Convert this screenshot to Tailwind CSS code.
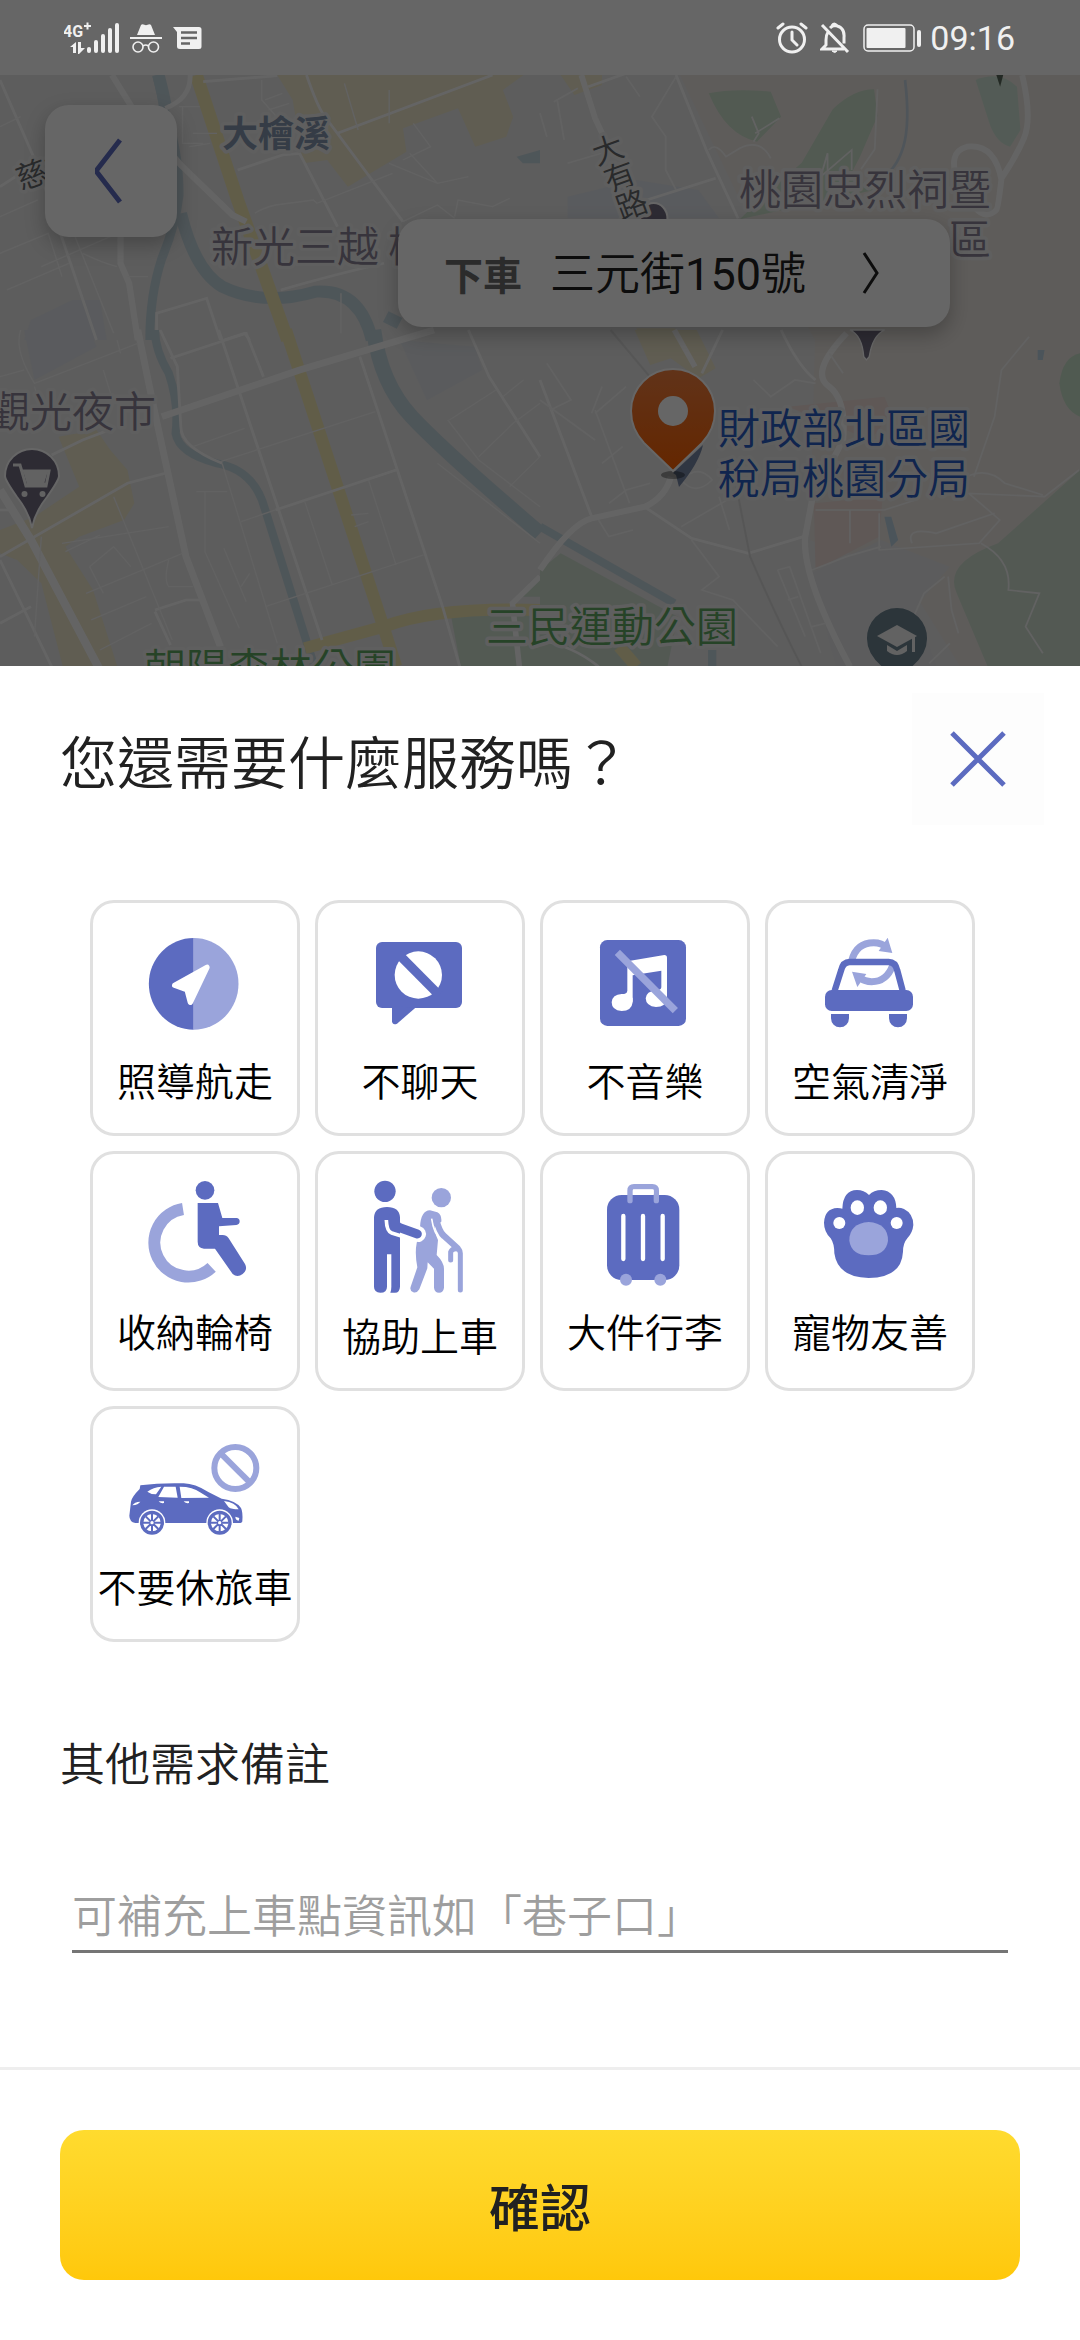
<!DOCTYPE html>
<html lang="zh-Hant">

<head>
    <meta charset="UTF-8">
    <meta name="viewport" content="width=device-width, initial-scale=1.0">
    <title>叫車服務需求</title>
    <script src="https://cdn.jsdelivr.net/npm/@tailwindcss/browser@4"></script>
</head>

<body class="flex flex-col min-h-screen bg-white text-[#212121] font-[350] font-['Noto_Sans_CJK_TC','Roboto',sans-serif]">

    <!-- status bar -->
    <header class="flex items-center justify-between h-[75px] pl-[64px] pr-[65px] bg-[#666666] text-[#f0f0f0]">
        <div class="flex items-center gap-[10px]">
            <svg class="w-[56px] h-[32px]" viewBox="64 21 56 32" fill="currentColor">
                <text x="63" y="36" font-size="16" font-weight="700" font-family="Roboto">4G</text>
                <path d="M84 25h7M87.500 21.500v7" stroke="currentColor" stroke-width="2" />
                <path d="M70 46l6-5v11h-3v-6zM78 41h3v6h4l-6 6h-1z" />
                <rect x="87" y="46" width="4" height="6" rx="2" />
                <rect x="94" y="39" width="4" height="13" rx="2" />
                <rect x="101" y="33" width="4" height="19" rx="2" />
                <rect x="108" y="27" width="4" height="25" rx="2" />
                <rect x="115" y="22" width="4" height="30" rx="2" />
            </svg>
            <svg class="w-[32px] h-[32px]" viewBox="130 22 32 32" fill="currentColor">
                <path d="M137 35l4-10q1-1 2.500-.5l2.500.8 2.500-.8q1.500-.5 2.500.5l4 10zM130 37h32v2h-32z" />
                <g fill="none" stroke="currentColor" stroke-width="1.600">
                    <circle cx="138" cy="47" r="5" />
                    <circle cx="153.500" cy="47" r="5" />
                    <path d="M143 46q2.700-2 5.500 0" />
                </g>
            </svg>
            <svg class="w-[30px] h-[26px]" viewBox="173 25 30 26">
                <path d="M174 27h26q2.500 0 2.500 2.500v17q0 2.500-2.500 2.500h-19q-3 0-3-2.500V32z" fill="currentColor" />
                <path d="M182 32.500h16M182 38h16M182 43.500h9" stroke="#666666" stroke-width="2.400" />
            </svg>
        </div>
        <div class="flex items-center gap-[12px]">
            <svg class="w-[32px] h-[32px]" viewBox="776 21 32 32" fill="none" stroke="currentColor" stroke-width="3" stroke-linecap="round">
                <circle cx="792" cy="38.500" r="12.500" />
                <path d="M792 31v8l5 5M778 27l5-4M806 27l-5-4" />
            </svg>
            <svg class="w-[30px] h-[32px]" viewBox="819 21 30 32" fill="none" stroke="currentColor" stroke-width="3">
                <path d="M821 24l26 27M827 31q-2 3-2 8v5l-4 4h22M829 27q2-2 4-2.500 11 1 10 12v6" />
                <path d="M831 25q2-4 5 0" />
                <path d="M831 50q3 3 5 0z" fill="currentColor" stroke-width="1" />
            </svg>
            <svg class="w-[60px] h-[28px]" viewBox="863 23 60 28" fill="currentColor">
                <rect x="865" y="24" width="50" height="26" rx="4" fill="none" stroke="currentColor" stroke-width="1.500" />
                <rect x="867.500" y="27" width="39" height="20" rx="1" />
                <rect x="918" y="29" width="4" height="17" rx="2" />
            </svg>
            <time class="-ml-1 font-['Roboto'] text-[34px] leading-[40px] font-normal">09:16</time>
        </div>
    </header>

    <!-- map, dimmed behind the sheet -->
    <section class="relative h-[591px] shrink-0 overflow-hidden bg-[#e8e8e8]">
        <svg class="absolute inset-0 w-full h-full" viewBox="0 75 1080 591" preserveAspectRatio="xMidYMid slice" fill="none">
            <!-- hills on the east side -->
            <path d="M680 75H1080V666H960L900 570 810 540 815 340 740 200z" fill="#ebe6e1" />
            <!-- north west -->
            <g transform="scale(.3444 .3333)">
                <path d="M805 225h715l-60 45 30 80-20 60-90 30-50-115-160 60 10 70-170 105-60-80-70 10-30-190z" fill="#efe8cc" />
                <path d="M90 960l120-60 80 0 20 120H70z" fill="#e0e4ea" />
                <path d="M455 225q15 60 20 100 45 120 45 260-10 90-50 190-35 110-35 245" stroke="#c4d6de" stroke-width="26" />
                <path d="M460 225q15 60 20 90M525 640q40 170 120 220 120 60 270 15 130-10 165 145M1120 950l40 20" stroke="#c4d6de" stroke-width="36" />
                <path d="M1500 470l68-20v40h-50z" fill="#c4d6de" />
                <path d="M570 225L690 600 835 1020" stroke="#f3e8b4" stroke-width="38" />
                <g stroke="#fbfbfb" stroke-width="26">
                    <path d="M325 225l60 100 140 170 150 150 40 20M350 700v90l25 60 25 170" stroke-width="18" />
                    <path d="M480 325q75-30 72-100" stroke-width="14" />
                </g>
                <path d="M0 240L110 500 280 1020M0 560l60-40M590 245l215-18M890 225q30 90 50 120L1170 665M980 400L1430 225M690 510l130-45 50-5 110 220M815 870q170-50 300-80M455 1020v-80l145-45 40 125M650 1020l60-20 15 20" stroke="#fbfbfb" stroke-width="8" />
                <path d="M0 380l60-30M0 650l110-50M0 760l140-60 40 130M20 870l180-80M210 690l120 310M120 800l200-90M240 760q60 30 100 40M370 830h60M530 320v110h60M520 320h60M550 440l60-10M560 400h70M760 240v60l60 70 40 80M770 300l50-20M780 330l60-20M740 640q20-15 60-25l110-15 10 10 220-90M1170 665l100-50 50 40M1130 490l140 60 90-20M1190 460l80 90M1320 650l10-50 100 20 50-25M1200 370l50 70-80 40M1130 370v-100M1000 250l40 140M990 1000v-120" stroke="#f6f6f6" stroke-width="4" />
            </g>
            <!-- north east -->
            <g transform="translate(540 0) scale(.3444 .3333)">
                <path d="M490 280q70-15 180-5l30 75-70 75q-90-20-140-145zM970 268l10 80-50 120-30 60 80 40-400 90 60-60 120-110 90-160q60-60 120-60z" fill="#cde1cd" />
                <path d="M1265 240q70-30 120 20l10 130-30 50q-40-10-60-70z" fill="#d0e4d6" />
                <path d="M1325 225h20l-9 35z" fill="#58685a" />
                <path d="M60 225h120v30l-80 30zM280 985h110l70 35H290z" fill="#efe8cc" />
                <path d="M80 590l200-50 180 30 60 85H80z" fill="#dfe3ea" />
                <path d="M1060 240q15 130-5 200t-70 100" stroke="#c6d4e2" stroke-width="8" />
                <path d="M120 225l40 130 50 110M1400 225q30 130 5 190t-65 120q-10 90-15 95-30 30-60-5M1340 540q-20-110-100-100-60 15-25 110" stroke="#fbfbfb" stroke-width="17" />
                <path d="M395 225l90 230 90 200M140 260l110-40M310 600l200-65" stroke="#fbfbfb" stroke-width="8" />
                <path d="M395 230l-70 120 40 60v100l30 60M250 230l40 60M50 300l20 120M110 265l-70 40M490 450q20-25 50 20l40-25q60-30 90 30M615 350l20 50-15 25M980 268l-8 180-40 60M835 560v-100l-20 70 90-80v60M695 355l-70 45M0 340l20 70M80 490l130-40" stroke="#f6f6f6" stroke-width="5" />
                <ellipse cx="330" cy="655" rx="40" ry="46" fill="#716c80" stroke="#fff" stroke-width="6" />
            </g>
            <!-- south west -->
            <g transform="translate(0 330) scale(.3444 .3333)">
                <path d="M70 0l190 0 20 50-180 100z" fill="#e0e4ea" />
                <path d="M1160 30l220 20 20 70-160 90z" fill="#e0e3e8" />
                <path d="M170 320l110-20 40 60 50 60 20 100-30 50-130 50-40 30 80 130 80 260H190L120 760 50 690 0 670v-70l100-40 130-90z" fill="#efe8cc" />
                <path d="M1310 860l258-20v170l-230 0z" fill="#cfe1d0" />
                <path d="M1510 800l58-60v60z" fill="#cfe1d0" />
                <path d="M450 0q0 60 40 130 30 90 20 180 10 60 120 90 110 20 140 140l140 460" stroke="#c4d6de" stroke-width="24" />
                <path d="M1085 0q20 160 110 260T1568 610" stroke="#c4d6de" stroke-width="44" />
                <path d="M830 0L1110 880l40 130M885 955l230-65q150-60 453-50" stroke="#f3e8b4" stroke-width="36" />
                <path d="M400 0l50 250 90 430 100 270M470 260l400-140L1260 0" stroke="#fbfbfb" stroke-width="20" />
                <path d="M0 480l90 150 200 390" stroke="#fbfbfb" stroke-width="24" />
                <path d="M1568 740l-80 80 20 190" stroke="#fbfbfb" stroke-width="16" />
                <path d="M465 0l50 110 10 180q0 60 120 110" stroke="#fbfbfb" stroke-width="8" />
                <path d="M495 85L715 10l50 130M635 0l300 930M150 375l90-45 90-35M0 680l370-220 110-30M800 540l350-120M1045 80l240 750 50 180M1360 0l60 140 148 240M0 690l150 320M0 880l90-50M450 840l90-30h45M450 845l45 100M0 540h30" stroke="#fbfbfb" stroke-width="8" />
                <path d="M1270 400l298 240M640 395l450-150M560 350l150-55M700 575l100-35M885 515l80 250M770 830l460-155M1070 450l80 255M1020 555l50-5M1030 590l40-15M645 400l160 540M570 485h90M595 485v180l100 230M650 655l65 160M490 690q-15 60 0 80h70M330 500l170 430M180 640l310-50M190 665l100-50M260 710l70-60 50 60M250 790l280-120M265 870l160-70M290 960l150-80M260 710l40 80M0 140l70-20M60 0q-20 60 40 160l300-120M100 170l30 100M300 120l30 100M340 30l10 40M1300 270l90 120 178 140M1305 270l135-90M1390 380l100-100 78-60M1480 470l88-90M1460 200l60-50M120 620l-20 300M700 770l25-40" stroke="#f4f4f4" stroke-width="4" />
            </g>
            <!-- south east -->
            <g transform="translate(540 330) scale(.3444 .3333)">
                <path d="M275 0h180l55 115-50 30-80-60-60 20z" fill="#efe8cc" />
                <path d="M795 520l200-20-10 120-185 100zM720 230l280-30 20 50-60 80z" fill="#eddcd8" />
                <path d="M790 730l200-100 200 80-100 120 60 180H860z" fill="#e6e6e8" />
                <path d="M0 720l60-50 340 190-30 150H0zM1568 420L1330 640q-160 60-120 150l90 220h268z" fill="#cfdfd0" />
                <path d="M1568 70q-50 10-60 90 10 80 60 100z" fill="#c8e0ca" />
                <path d="M1000 560h20l20 70-20 20zM1445 60h20l-5 30h-15z" fill="#bcd3e2" />
                <path d="M0 590l390 230M500 960v50" stroke="#c4d6de" stroke-width="24" />
                <path d="M230 950l50 60" stroke="#f3e8b4" stroke-width="36" />
                <path d="M0 720Q90 580 150 565l155-35q60-30 75-90M900 1010Q760 740 770 620l20-110 90-180q10-120-40-160-60-40 50-160" stroke="#fbfbfb" stroke-width="18" />
                <path d="M390 0l60 110" stroke="#fbfbfb" stroke-width="16" />
                <path d="M310 535l130 90 165 45 160-50M0 150l150 410M530 0l-60 130M700 0q50 110 100 150M0 930q100 20 170 80" stroke="#fbfbfb" stroke-width="8" />
                <path d="M205 0l130 160M570 470l40 210q80 190 150 330" stroke="#d8d8d8" stroke-width="6" />
                <path d="M20 100l70 110-60 30M0 210l160 120M160 240l100 280M180 170l-30 80M160 250l90-80M170 570l30 50 70-20M200 520l50-40 70-20M240 350l-60 50M410 590l150-90M440 630l80 110-50 40 90 30 130 140M690 720l80 200M690 720l35-10 90 260M720 810l30-10M790 890l40-10M520 500l30 100M410 450q50-50 90 0-50 50-90 0M620 150l50 50 70-50 60 10M800 540h200l90-30M900 540v100M985 550v110l290-20 60-70-90-80 220 10 100-80M790 720l100-40 100-30M1080 640q-20-50 70-30l170-60M1240 440q60-30 110 20l110 35M1420 20l-80 100-20 140-60 180M1280 640q90 50 80 140l90 10-40 100 50 80M1175 740l-60 50-30 70M1185 740l10 100 20 70M840 70l40 60M1190 940l-60 60" stroke="#f5f5f5" stroke-width="5" />
                <path d="M900 0q35 15 40 80l8 10 8-10q10-65 45-80z" fill="#716c80" stroke="#fff" stroke-width="4" />
            </g>

            <!-- place names -->
            <g stroke="#eeeeee" stroke-width="7" stroke-linejoin="round" paint-order="stroke" font-size="42">
                <text x="222" y="147" font-size="36" font-weight="700" fill="#8496ae">大檜溪</text>
                <g fill="#8b8396">
                    <text x="211" y="262">新光三越 桃</text>
                    <text x="-12" y="427">觀光夜市</text>
                    <text x="739" y="205">桃園忠烈祠暨</text>
                    <text x="949" y="255">區</text>
                </g>
                <g fill="#66696c" font-size="31">
                    <text x="-15" y="12" transform="translate(607 149) rotate(-20)">大</text>
                    <text x="-15" y="12" transform="translate(619 176) rotate(-20)">有</text>
                    <text x="-15" y="12" transform="translate(631 204) rotate(-20)">路</text>
                    <text x="-15" y="12" transform="translate(31 174) rotate(-20)">慈文</text>
                </g>
                <g fill="#285cc4">
                    <text x="718" y="444">財政部北區國</text>
                    <text x="718" y="494">稅局桃園分局</text>
                </g>
                <g fill="#60a863">
                    <text x="486" y="642">三民運動公園</text>
                    <text x="144" y="684">朝陽森林公園</text>
                </g>
            </g>

            <!-- shopping pin -->
            <path d="M32 528q-3-16-15-31-12-17-12-21a27 27 0 1 1 54 0q0 4-12 21-12 15-15 31z" fill="#716c80" stroke="#fff" stroke-width="2" />
            <path d="M13 465h7l6 21h20l3-15H22M26 486v-2M27 484h18" stroke="#f4f4f4" stroke-width="3" />
            <path d="M23 471h25l-4 13H27z" fill="#f4f4f4" />
            <circle cx="24.500" cy="494" r="3" fill="#f4f4f4" />
            <circle cx="42.500" cy="494" r="3" fill="#f4f4f4" />
            <!-- school pin -->
            <path d="M897 608a30 30 0 0 1 30 31q0 16-18 30h-24q-18-14-18-30a30 30 0 0 1 30-31z" fill="#6f8592" />
            <path d="M877 636l20-11 20 11-20 11z" fill="#f4f4f4" />
            <path d="M887 645l10 6 10-6v6q-10 8-20 0zM912 637h3v15h-3z" fill="#f4f4f4" />
            <!-- drop-off pin -->
            <path d="M703 445l-30 28 3 2 3 12q20-24 24-42z" fill="#7787a6" />
            <ellipse cx="673" cy="475" rx="12" ry="4" fill="#000" fill-opacity=".35" />
            <path d="M673 471l-29-28q-13-14-13-32a42 42 0 0 1 84 0q0 18-13 32z" fill="url(#pin)" stroke="#fff" stroke-width="2" />
            <circle cx="673" cy="411" r="15" fill="#fff" />
            <defs>
                <linearGradient id="pin" x1="0" y1="0" x2="0" y2="1">
                    <stop offset="0" stop-color="#f28040" />
                    <stop offset="1" stop-color="#fa6000" />
                </linearGradient>
            </defs>
        </svg>

        <button type="button" aria-label="返回" class="absolute left-[45px] top-[30px] grid place-items-center size-[132px] rounded-3xl bg-white shadow-[0_8px_20px_rgba(0,0,0,0.25)]">
            <svg class="w-[32px] h-[66px]" viewBox="3 0 32 66" fill="none" stroke="#5c6bc0" stroke-width="5">
                <path d="M28 2L4 33l24 31" />
            </svg>
        </button>
        <button type="button" class="absolute right-[130px] top-[144px] flex items-center h-[108px] pl-[46px] pr-[70px] rounded-3xl bg-white text-[45px] leading-[60px] whitespace-nowrap text-[#212121] shadow-[0_8px_20px_rgba(0,0,0,0.25)]">
            <span class="text-[39px] font-bold text-[#6b6b6b]">下車</span>
            <span class="ml-[28px]">三元街<span class="font-['Roboto'] font-normal">150</span>號</span>
            <svg class="ml-[56px] w-[18px] h-[42px]" viewBox="0 0 18 42" fill="none" stroke="#212121" stroke-width="3">
                <path d="M2 1l13 20L2 41" />
            </svg>
        </button>
        <div class="absolute inset-0 bg-black/60 pointer-events-none"></div>
    </section>

    <!-- service sheet -->
    <main class="flex flex-col flex-1 bg-white">
        <div class="flex items-center justify-between pt-[27px] pl-[60px] pr-[36px]">
            <h1 class="text-[57px] leading-[72px]">您還需要什麼服務嗎？</h1>
            <button type="button" aria-label="關閉" class="grid place-items-center size-[132px] bg-[#fdfdfd]">
                <svg class="size-[56px]" viewBox="0 0 56 56" fill="none" stroke="#5c6bc0" stroke-width="5">
                    <path d="M2 2l52 52M54 2L2 54" />
                </svg>
            </button>
        </div>

        <div class="grid grid-cols-4 gap-[15px] mt-[75px] ml-[90px] mr-[105px] text-[39px] leading-[48px] text-black whitespace-nowrap">
            <button type="button" class="flex flex-col items-center gap-3 pb-[30px] border-3 border-[#e0e0e0] rounded-3xl">
                <svg class="w-full h-[140px]" viewBox="39 39 612 420">
                    <path d="M341 144a134 137 0 0 0 0 275z" fill="#5c6bc0" />
                    <path d="M341 144a134 137 0 0 1 0 275z" fill="#9aa4db" />
                    <path d="M284 286l97-54-50 105-10-38z" fill="#fff" stroke="#fff" stroke-width="16" stroke-linejoin="round" />
                </svg>
                <span>照導航走</span>
            </button>
            <button type="button" class="flex flex-col items-center gap-3 pb-[30px] border-3 border-[#e0e0e0] rounded-3xl">
                <svg class="w-full h-[140px]" viewBox="714 39 612 420">
                    <rect x="888" y="156" width="258" height="198" rx="18" fill="#5c6bc0" />
                    <path d="M936 350v44q2 13 15 7l57-49z" fill="#5c6bc0" />
                    <circle cx="1015" cy="255" r="71" fill="#fff" />
                    <path d="M955 192l122 123" stroke="#5c6bc0" stroke-width="27" />
                </svg>
                <span>不聊天</span>
            </button>
            <button type="button" class="flex flex-col items-center gap-3 pb-[30px] border-3 border-[#e0e0e0] rounded-3xl">
                <svg class="w-full h-[140px]" viewBox="39 39 612 420">
                    <rect x="210" y="150" width="258" height="258" rx="22" fill="#5c6bc0" />
                    <path d="M292 214l111-19q8 0 8 8v122h-17v-83l-86 14v79h-16z" fill="#fff" />
                    <path d="M308 325v12q-3 26-33 26-30-2-30-26 2-24 30-25 17 0 17-10zM411 315v10q-3 26-33 26-30-2-31-26 2-22 30-23 17-2 17-10z" fill="#fff" />
                    <path d="M262 187l174 175" stroke="#9aa4db" stroke-width="22" />
                </svg>
                <span>不音樂</span>
            </button>
            <button type="button" class="flex flex-col items-center gap-3 pb-[30px] border-3 border-[#e0e0e0] rounded-3xl">
                <svg class="w-full h-[140px]" viewBox="714 39 612 420">
                    <g fill="none" stroke="#9aa4db" stroke-width="21">
                        <path d="M965 212q14-54 66-54 24 0 40 15" />
                        <path d="M1088 226q-18 49-63 49-20 0-36-12" />
                    </g>
                    <path d="M1073 143l14 46-41-6zM966 245l43 7-27 39z" fill="#9aa4db" />
                    <path d="M914 302l19-60q6-26 26-26h117q20 0 26 26l16 60" fill="none" stroke="#5c6bc0" stroke-width="19" />
                    <rect x="885" y="300" width="264" height="63" rx="20" fill="#5c6bc0" />
                    <path d="M903 372h54v13a27 27 0 0 1-54 0zM1077 372h54v13a27 27 0 0 1-54 0z" fill="#5c6bc0" />
                </svg>
                <span>空氣清淨</span>
            </button>
            <button type="button" class="flex flex-col items-center gap-3 pb-[30px] border-3 border-[#e0e0e0] rounded-3xl">
                <svg class="w-full h-[140px]" viewBox="39 42 612 420">
                    <path d="M309 207A102 102 0 1 0 395 382" fill="none" stroke="#9aa4db" stroke-width="36" />
                    <circle cx="375" cy="151" r="28" fill="#5c6bc0" />
                    <path d="M353 189h61l13 45h42q10 1 10 10 0 10-10 11l-52 4v26h11q11 0 18 10l49 77q9 17-7 30-16 12-30 0l-53-76h-33q-19-2-19-21z" fill="#5c6bc0" />
                </svg>
                <span>收納輪椅</span>
            </button>
            <button type="button" class="flex flex-col items-center gap-3 pb-[30px] border-3 border-[#e0e0e0] rounded-3xl">
                <svg class="w-full h-[144px]" viewBox="714 42 612 432">
                    <circle cx="1084" cy="173" r="29" fill="#9aa4db" />
                    <path d="M1020 262q2-50 30-51l22 6q14 8 12 28l-20 14q2 26 10 41l-4 45q22 22 22 42v56q-2 15-15 15t-15-15v-57l-19-19-1 18-24 63q-7 12-18 9-12-5-8-17l20-58q-8-42-2-72z" fill="#9aa4db" />
                    <path d="M1055 236q6 44 28 64" fill="none" stroke="#fff" stroke-width="5" />
                    <g fill="none" stroke="#9aa4db" stroke-linecap="round">
                        <path d="M1068 236q10 40 24 52l40 36" stroke-width="19" />
                        <path d="M1112 360v-24q3-10 16-10t13 14v110" stroke-width="15" />
                    </g>
                    <path d="M990 274l24 8" stroke="#fff" stroke-width="48" stroke-linecap="round" />
                    <circle cx="915" cy="154" r="32" fill="#5c6bc0" />
                    <path d="M882 440V232q2-31 39-31t39 31v208q-1 18-15 18h-14q3-8 3-18v-97h-13v97q0 18-20 18-19-1-19-18z" fill="#5c6bc0" />
                    <path d="M919 240q1 34 16 39l70 22" fill="none" stroke="#fff" stroke-width="11" />
                    <path d="M940 232q4 26 22 32l50 18" fill="none" stroke="#5c6bc0" stroke-width="27" stroke-linecap="round" />
                </svg>
                <span>協助上車</span>
            </button>
            <button type="button" class="flex flex-col items-center gap-3 pb-[30px] border-3 border-[#e0e0e0] rounded-3xl">
                <svg class="w-full h-[140px]" viewBox="39 42 612 420">
                    <rect x="231" y="165" width="217" height="255" rx="44" fill="#5c6bc0" />
                    <path d="M300 182v-30q0-12 12-12h55q12 0 12 12v30" fill="none" stroke="#9aa4db" stroke-width="16" stroke-linecap="round" />
                    <path d="M309 149h62v14h-62z" fill="#fff" />
                    <path d="M280 228v129M339 228v129M398 228v129" stroke="#fff" stroke-width="13" stroke-linecap="round" />
                    <circle cx="288" cy="419" r="18" fill="#9aa4db" />
                    <circle cx="391" cy="419" r="18" fill="#9aa4db" />
                </svg>
                <span>大件行李</span>
            </button>
            <button type="button" class="flex flex-col items-center gap-3 pb-[30px] border-3 border-[#e0e0e0] rounded-3xl">
                <svg class="w-full h-[140px]" viewBox="714 42 612 420">
                    <path d="M882 248q2-42 40-44 10 0 15 2 2-55 44-56 21 0 36 15 14-15 38-15 42 4 44 54 11-2 23 3 28 14 28 48-2 23-18 40-13 15-13 40-4 78-103 79-93-2-103-74 0-29-11-45-20-20-20-47z" fill="#5c6bc0" />
                    <g fill="#fff">
                        <ellipse cx="982" cy="203" rx="20" ry="22" />
                        <ellipse cx="1051" cy="203" rx="20" ry="22" />
                        <circle cx="928" cy="249" r="18" />
                        <circle cx="1100" cy="249" r="18" />
                    </g>
                    <path d="M1016 246q58 4 58 56-6 43-58 44-52-1-58-44 0-52 58-56z" fill="#9aa4db" />
                </svg>
                <span>寵物友善</span>
            </button>
            <button type="button" class="flex flex-col items-center gap-3 pb-[30px] border-3 border-[#e0e0e0] rounded-3xl">
                <svg class="w-full h-[140px]" viewBox="39 42 612 420">
                    <g fill="none" stroke="#9aa4db" stroke-width="18">
                        <circle cx="466" cy="219" r="63" />
                        <path d="M422 175l88 88" />
                    </g>
                    <path d="M148 362l5-42q2-14 26-38l2-11q60-8 130-6 34 1 74 26l40 20q44 6 58 28 6 12 4 39 0 6-10 6H166q-18-4-18-22z" fill="#5c6bc0" />
                    <g fill="#fff">
                        <path d="M202 290q18-14 42-15l-16 23q-16 0-26-8zM252 275h35l6 33-58-2zM299 275q40 0 61 17l27 16-83 1zM157 331q6-10 24-11-6 9-24 11zM432 318q34 4 44 25-22 0-30-6zM236 319h16v5q-12 2-16-5zM311 319h16v5q-12 2-16-5zM466 365l12 4-2 8q-10-2-10-12z" />
                        <circle cx="216" cy="383" r="40" />
                        <circle cx="419" cy="383" r="40" />
                    </g>
                    <g fill="none" stroke="#5c6bc0">
                        <circle cx="216" cy="383" r="31" stroke-width="10" />
                        <circle cx="419" cy="383" r="31" stroke-width="10" />
                        <path d="M216 356v54M189 383h54M197 364l38 38M235 364l-38 38M419 356v54M392 383h54M400 364l38 38M438 364l-38 38" stroke-width="6" />
                    </g>
                    <circle cx="216" cy="383" r="5" fill="#fff" />
                    <circle cx="419" cy="383" r="5" fill="#fff" />
                </svg>
                <span>不要休旅車</span>
            </button>
        </div>

        <label for="note" class="mt-[90px] px-[60px] text-[45px] leading-[60px]">其他需求備註</label>
        <div class="flex mt-[86px] px-[72px]">
            <input id="note" type="text" placeholder="可補充上車點資訊如「巷子口」" class="w-full h-[75px] pb-[2px] border-b-3 border-[#757575] text-[45px] leading-[60px] placeholder:text-[#9e9e9e] outline-none">
        </div>

        <footer class="mt-auto p-[60px] border-t-3 border-[#eeeeee]">
            <button type="button" class="w-full h-[150px] rounded-3xl bg-linear-to-b from-[#ffdb2e] to-[#ffc80a] text-[51px] leading-[60px] font-medium">確認</button>
        </footer>
    </main>
</body>

</html>
